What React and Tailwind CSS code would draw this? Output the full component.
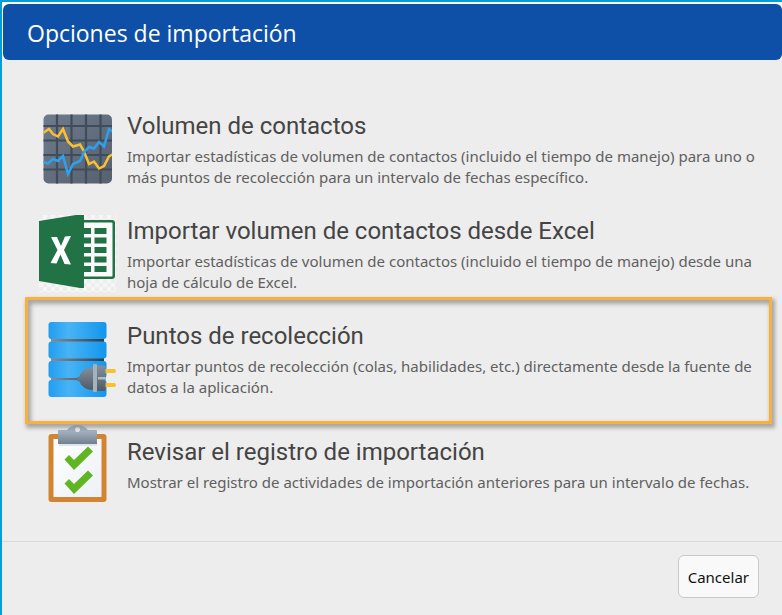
const GRID_LINES = [14.5, 29, 43.5, 58];

function ChartIcon() {
  return (
    <svg viewBox="0 0 76 76" className="h-[76px] w-[76px]" aria-hidden="true">
      <defs>
        <linearGradient id="chartBg" x1="0" y1="0" x2="1" y2="1">
          <stop offset="0" stopColor="#6e7b8c" />
          <stop offset="1" stopColor="#56616f" />
        </linearGradient>
        <clipPath id="chartClip">
          <rect x="4.500" y="2.500" width="68.500" height="69" rx="5" />
        </clipPath>
      </defs>
      <g clipPath="url(#chartClip)">
        <rect x="4" y="2" width="70" height="70" fill="url(#chartBg)" />
        <g transform="translate(4 0)" stroke="#414c59" strokeWidth="2.2">
          {GRID_LINES.map((n) => (
            <path key={n} d={`M${n - 0.5} 2V72M-1 ${n - 0.5}H70`} />
          ))}
        </g>
        <g fill="none" strokeWidth="2.5">
          <path
            d="M4 21L10 17L14 22L19 24.500L24 17L29 29.500L34 34.500L41 32.500L45 39.500L50 52L55 49.500L60 56.500L65 54L70 44.500L74 42"
            stroke="#fbc02d"
          />
          <path
            d="M4 50L9 51.500L14 47L19 49L24 44L29 62L34 52L41 49L45 40L50 35L55 36.500L60 30L65 34.500L70 17L74 20"
            stroke="#2da0f0"
          />
        </g>
      </g>
    </svg>
  );
}

function ExcelIcon() {
  return (
    <svg viewBox="0 0 77 77" className="-mt-1 h-[77px] w-[77px]" aria-hidden="true">
      <defs>
        <pattern id="checker" width="8" height="8" patternUnits="userSpaceOnUse">
          <rect width="8" height="8" fill="#f6f6f6" />
          <path d="M0 0h4v4H0zM4 4h4v4H4z" fill="#ededed" />
        </pattern>
      </defs>
      <rect width="77" height="77" fill="url(#checker)" />
      <rect x="40" y="5" width="36" height="59" rx="3" fill="#217346" />
      <rect x="40" y="7.500" width="33.500" height="54" rx="1" fill="#fafafa" />
      <path
        d="M44 13h8v6h-8zM44 22.500h8v6h-8zM44 32h8v6h-8zM44 41.500h8v6h-8zM44 51h8v6h-8zM55.500 13h12v6h-12zM55.500 22.500h12v6h-12zM55.500 32h12v6h-12zM55.500 41.500h12v6h-12zM55.500 51h12v6h-12z"
        fill="#217346"
      />
      <path d="M0 6L37 0H45V73H41L0 66z" fill="#217346" />
      <path
        d="M12 22L18 22L22 31L26 21.500L32 21L25 35L32 49.500L25.500 49L21.500 39.500L17.500 48.500L11.500 48L18.500 35z"
        fill="#fff"
      />
    </svg>
  );
}

function DatabaseIcon() {
  return (
    <svg viewBox="0 0 76 76" className="h-[76px] w-[76px] overflow-visible" aria-hidden="true">
      <defs>
        <linearGradient id="dbBlue">
          <stop offset="0" stopColor="#219df0" />
          <stop offset="0.35" stopColor="#48b3f5" />
          <stop offset="1" stopColor="#1296ed" />
        </linearGradient>
        <linearGradient id="dbGap">
          <stop offset="0" stopColor="#858f9a" />
          <stop offset="1" stopColor="#303c4a" />
        </linearGradient>
        <linearGradient id="plug" x1="0" y1="0" x2="0" y2="1">
          <stop offset="0" stopColor="#84909d" />
          <stop offset="1" stopColor="#4e5b67" />
        </linearGradient>
      </defs>
      <path d="M12 15H65V22H12zM12 34H65V41H12zM12 54H65V60H12z" fill="url(#dbGap)" />
      <g fill="url(#dbBlue)">
        <rect x="9.500" y="0" width="58" height="17" rx="3" />
        <rect x="9.500" y="19.500" width="58" height="17" rx="3" />
        <rect x="9.500" y="39" width="58" height="17" rx="3" />
        <rect x="9.500" y="58" width="58" height="17" rx="3" />
      </g>
      <path
        d="M66 47H75.500Q77 47.500 77 49T75.500 51H66zM66 61H75.500Q77 61.500 77 63T75.500 65H66z"
        fill="#f8c22c"
      />
      <path d="M38 55H40Q44 45 54 45V68Q44 68 40 59H38z" fill="url(#plug)" />
      <rect x="57" y="43.500" width="9.500" height="25.500" rx="1" fill="url(#plug)" />
      <rect x="54" y="42" width="4" height="28" rx="1" fill="#a4b2be" />
      <path d="M59 55H66.500V57.500H59z" fill="#b2bdc7" />
    </svg>
  );
}

function ClipboardIcon() {
  return (
    <svg viewBox="0 0 76 76" className="h-[76px] w-[76px] overflow-visible" aria-hidden="true">
      <defs>
        <linearGradient id="clip" x1="0" y1="0" x2="0" y2="1">
          <stop offset="0" stopColor="#8997a5" />
          <stop offset="0.35" stopColor="#a1afbd" />
          <stop offset="1" stopColor="#71808f" />
        </linearGradient>
        <linearGradient id="paper" x1="0" y1="0" x2="1" y2="1">
          <stop offset="0" stopColor="#ffffff" />
          <stop offset="1" stopColor="#edf0f5" />
        </linearGradient>
      </defs>
      <rect x="9.500" y="7" width="58" height="68" rx="3" fill="#d18532" />
      <rect x="14.500" y="12" width="48" height="58" fill="url(#paper)" />
      <rect x="20" y="16" width="38" height="3" fill="#dfe4ec" />
      <path
        fillRule="evenodd"
        d="M19 4Q19 3 20 3H28Q32 -2 38.500 -2T49 3H57Q58 3 58 4V17H19zM38.500 0a2.500 2.500 0 1 0 0.100 0z"
        fill="url(#clip)"
      />
      <path
        d="M25.500 32.500L30 28L35 33L49 19.500L54 24.500L35 43zM25.500 56.500L30 52L35 57L49 43.500L54 48.500L35 67z"
        fill="#60b522"
      />
    </svg>
  );
}

const OPTIONS = [
  {
    id: 'volume',
    Icon: ChartIcon,
    title: 'Volumen de contactos',
    text: 'Importar estadísticas de volumen de contactos (incluido el tiempo de manejo) para uno o más puntos de recolección para un intervalo de fechas específico.',
  },
  {
    id: 'excel',
    Icon: ExcelIcon,
    title: 'Importar volumen de contactos desde Excel',
    text: 'Importar estadísticas de volumen de contactos (incluido el tiempo de manejo) desde una hoja de cálculo de Excel.',
  },
  {
    id: 'points',
    Icon: DatabaseIcon,
    title: 'Puntos de recolección',
    text: 'Importar puntos de recolección (colas, habilidades, etc.) directamente desde la fuente de datos a la aplicación.',
    highlighted: true,
  },
  {
    id: 'log',
    Icon: ClipboardIcon,
    title: 'Revisar el registro de importación',
    text: 'Mostrar el registro de actividades de importación anteriores para un intervalo de fechas.',
  },
];

function ImportOption({ Icon, title, text, highlighted }) {
  return (
    <button type="button" className="relative flex w-full items-center gap-3 text-left">
      <span className="w-[76px] shrink-0">
        <Icon />
      </span>
      <span className="flex min-w-0 flex-1 flex-col gap-1.5">
        <span className="font-['Roboto',sans-serif] text-2xl leading-7 text-[#444]">{title}</span>
        <span className="text-[15px] leading-[21px] text-[#606060]">{text}</span>
      </span>
      {/* Focus frame around the row */}
      {highlighted && (
        <span className="pointer-events-none absolute -top-[25px] -right-[10px] -bottom-[26px] -left-[14px] border-3 border-[#f8b03f] shadow-[2px_3px_4px_1px_rgba(0,0,0,0.3),inset_2px_3px_4px_1px_rgba(0,0,0,0.3)]" />
      )}
    </button>
  );
}

export default function App() {
  return (
    <div className="flex min-h-screen flex-col border-t-2 border-l-2 border-[#009fdc] bg-[#ededed] font-['Noto_Sans',sans-serif]">
      <header className="bg-gradient-to-b from-white from-90% to-[#efefef] pt-0.5 pl-px">
        <div className="flex h-14 items-center rounded-md bg-[#0e50a7] px-6 pt-0.5">
          <h1 className="font-['Open_Sans',sans-serif] text-[23px] leading-8 text-white">Opciones de importación</h1>
        </div>
      </header>
      <main className="flex flex-col gap-[29px] border-b border-[#dadada] pt-[52px] pr-5 pb-[38px] pl-[37px]">
        {OPTIONS.map((option) => (
          <ImportOption key={option.id} {...option} />
        ))}
      </main>
      <footer className="flex justify-end px-[23px] py-[13px]">
        <button
          type="button"
          className="h-[43px] rounded-md border border-[#c9c9c9] bg-[#f9f9f9] px-[9px] pt-0.5 text-[15px] text-[#111]"
        >
          Cancelar
        </button>
      </footer>
    </div>
  );
}
